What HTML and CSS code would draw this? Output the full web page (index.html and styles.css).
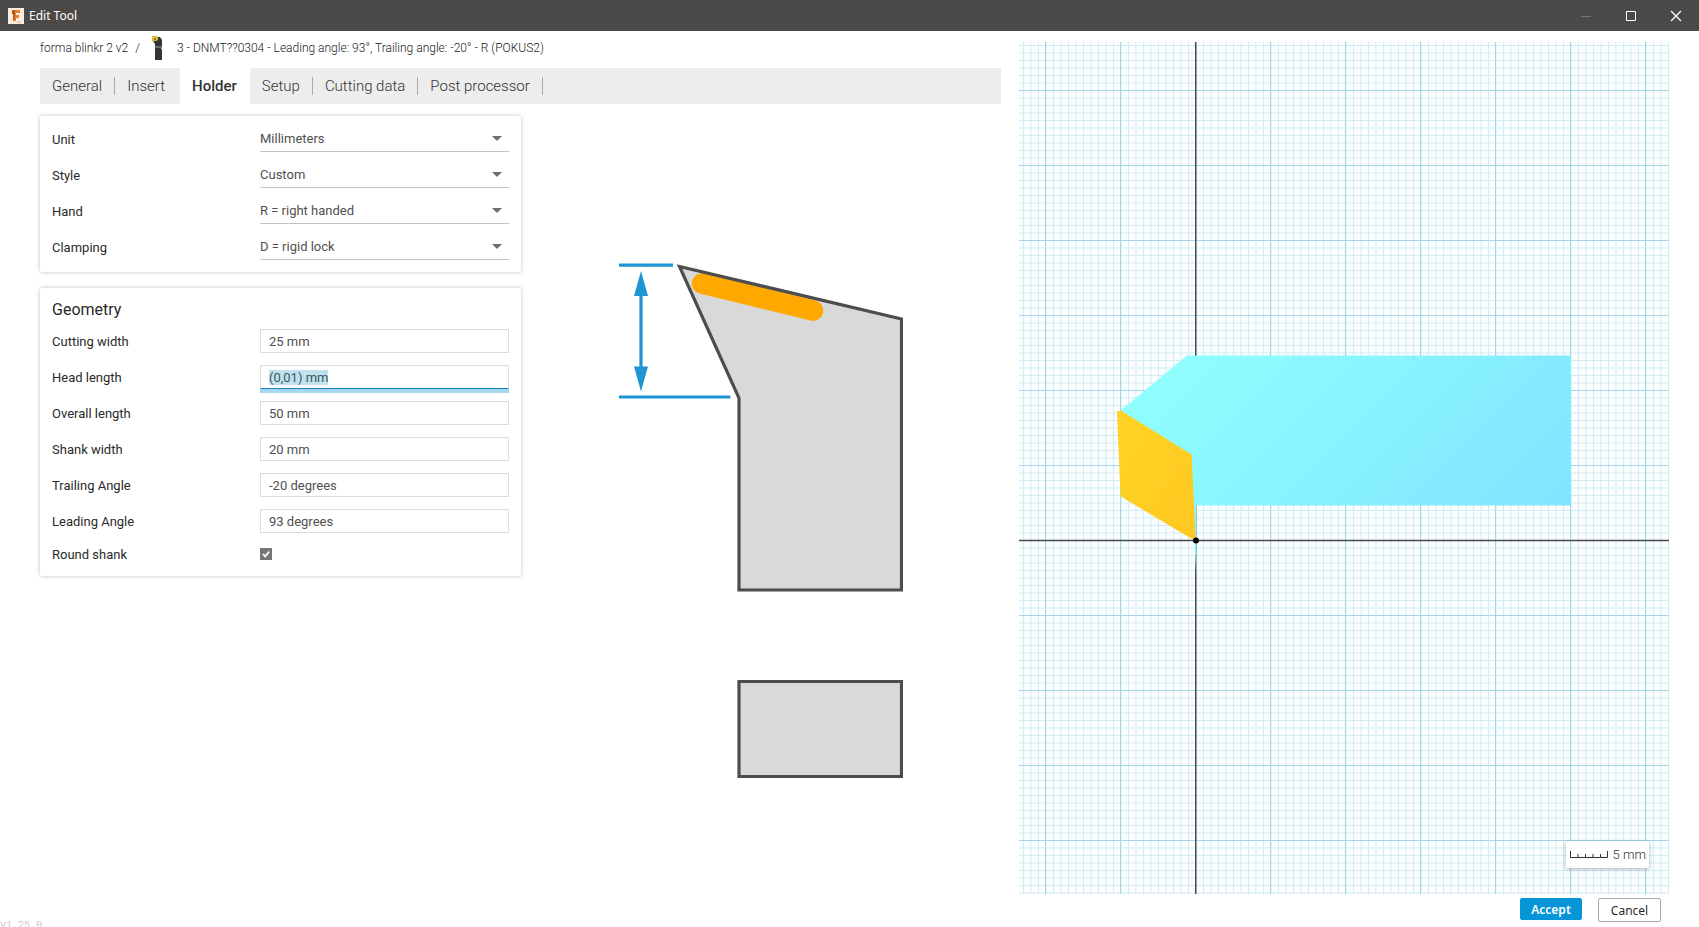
FILE: index.html
```html
<!DOCTYPE html>
<html lang="en">
<head>
<meta charset="utf-8">
<title>Edit Tool</title>
<link rel="stylesheet" href="styles.css">
</head>
<body>
<header class="titlebar">
  <svg class="app-icon" viewBox="0 0 16 16" aria-hidden="true">
    <rect width="16" height="16" fill="#fdebdc"/>
    <path d="M4 2h8v3H8v2h3v3H8v3H5V6H4z" fill="#e5812b"/>
    <path d="M4 2h3v9l-2 2V6H4z" fill="#b9591a"/>
    <path d="M9 14h4" stroke="#e0a67c"/>
  </svg>
  <h1 class="window-title">Edit Tool</h1>
  <div class="window-controls">
    <button class="window-button" disabled aria-label="Minimize"><svg viewBox="0 0 12 12"><path d="M1 6.5h10" stroke="#777673"/></svg></button>
    <button class="window-button" aria-label="Maximize"><svg viewBox="0 0 12 12"><path d="M1.5 1.5h9v9h-9z" stroke="#fff" fill="none"/></svg></button>
    <button class="window-button" aria-label="Close"><svg viewBox="0 0 12 12"><path d="M1 1l10 10M11 1L1 11" stroke="#fff" stroke-width="1.3"/></svg></button>
  </div>
</header>

<main class="workspace">
  <section class="editor">
    <nav class="breadcrumb" aria-label="Breadcrumb">
      <a class="crumb" href="#library">forma blinkr 2 v2</a>
      <span class="slash">/</span>
      <svg class="tool-icon" viewBox="0 0 10 24" aria-hidden="true">
        <path d="M1 1h7l2 3v6L9 12l1 2v10H3V8L1 5z" fill="#333436"/>
        <path d="M3 10h7v2H3z" fill="#6a6b6e"/>
        <path d="M0 0h6v4L4 5 0 5z" fill="#e5bd3c"/>
        <circle cx="3" cy="3" r="1" fill="#7c641d"/>
      </svg>
      <span>3 - DNMT??0304 - Leading angle: 93°, Trailing angle: -20° - R (POKUS2)</span>
    </nav>

    <div class="tabs" role="tablist">
      <button class="tab" role="tab">General</button>
      <button class="tab no-rule" role="tab">Insert</button>
      <button class="tab active" role="tab" aria-selected="true">Holder</button>
      <button class="tab" role="tab">Setup</button>
      <button class="tab" role="tab">Cutting data</button>
      <button class="tab" role="tab">Post processor</button>
    </div>

    <div class="holder">
      <form class="forms">
        <div class="card">
          <div class="row">
            <label for="unit">Unit</label>
            <div class="select"><select id="unit"><option>Millimeters</option><option>Inches</option></select><svg viewBox="0 0 10 5"><path d="M0 0h10L5 5z"/></svg></div>
          </div>
          <div class="row">
            <label for="style">Style</label>
            <div class="select"><select id="style"><option>Custom</option></select><svg viewBox="0 0 10 5"><path d="M0 0h10L5 5z"/></svg></div>
          </div>
          <div class="row">
            <label for="hand">Hand</label>
            <div class="select"><select id="hand"><option>R = right handed</option></select><svg viewBox="0 0 10 5"><path d="M0 0h10L5 5z"/></svg></div>
          </div>
          <div class="row">
            <label for="clamping">Clamping</label>
            <div class="select"><select id="clamping"><option>D = rigid lock</option></select><svg viewBox="0 0 10 5"><path d="M0 0h10L5 5z"/></svg></div>
          </div>
        </div>

        <div class="card">
          <h2 class="card-title">Geometry</h2>
          <div class="row"><label for="cutting-width">Cutting width</label><input class="field" type="text" id="cutting-width" value="25 mm"></div>
          <div class="row"><label for="head-length">Head length</label><input class="field" type="text" id="head-length" value="(0,01) mm"></div>
          <div class="row"><label for="overall-length">Overall length</label><input class="field" type="text" id="overall-length" value="50 mm"></div>
          <div class="row"><label for="shank-width">Shank width</label><input class="field" type="text" id="shank-width" value="20 mm"></div>
          <div class="row"><label for="trailing-angle">Trailing Angle</label><input class="field" type="text" id="trailing-angle" value="-20 degrees"></div>
          <div class="row"><label for="leading-angle">Leading Angle</label><input class="field" type="text" id="leading-angle" value="93 degrees"></div>
          <div class="row check-row">
            <label for="round-shank">Round shank</label>
            <div class="check"><input type="checkbox" id="round-shank" checked><svg viewBox="0 0 12 12"><path d="M3 6l2.2 2.3L9.2 3.6" fill="none" stroke="#fff" stroke-width="1.8"/></svg></div>
          </div>
        </div>
      </form>

      <div class="diagram">
        <svg viewBox="619 263 284 518" role="img" aria-label="Head length of the holder">
          <path d="M679.5 266.5L901.5 319v271H739V398z" fill="#d9d9d9"/>
          <path d="M702 283.5L813 310.5" stroke="#ffa900" stroke-width="20.5" stroke-linecap="round"/>
          <path d="M679.5 266.500L901.500 319v271H739V398z" fill="none" stroke="#4d4d4d" stroke-width="3.2"/>
          <path d="M739 681.5h162.500V776.500H739z" fill="#d9d9d9" stroke="#4d4d4d" stroke-width="3.2"/>
          <path d="M619 265.2h54M619 397h111.500M641 290v82" stroke="#1e95d3" stroke-width="3.2"/>
          <path d="M641 271l7 25h-14zM641 391.5l7-25h-14z" fill="#1e95d3"/>
        </svg>
      </div>
    </div>
  </section>

  <section class="preview">
    <div class="canvas">
      <svg class="scene" viewBox="0 0 650 852" preserveAspectRatio="xMidYMid slice" role="img" aria-label="Tool preview">
        <defs>
          <pattern id="minor" x="176.5" y="498" width="7.5" height="7.5" patternUnits="userSpaceOnUse">
            <path d="M0 .5h7.5M.5 0v7.5" stroke="#d3eaf2"/>
          </pattern>
          <pattern id="major" x="176" y="498" width="75" height="75" patternUnits="userSpaceOnUse">
            <path d="M0 .5h75M.5 0v75" stroke="#a6d6e6" stroke-width="1"/>
          </pattern>
          <linearGradient id="steel" gradientUnits="userSpaceOnUse" x1="200" y1="260" x2="480" y2="540">
            <stop offset="0" stop-color="#8fffff"/><stop offset="1" stop-color="#80e4ff"/>
          </linearGradient>
          <linearGradient id="carbide" x1="0" y1="0" x2="1" y2="1">
            <stop offset="0" stop-color="#ffd426"/><stop offset="1" stop-color="#ffc820"/>
          </linearGradient>
        </defs>
        <rect width="650" height="852" fill="#fafeff"/>
        <rect width="650" height="852" fill="url(#minor)"/>
        <rect width="650" height="852" fill="url(#major)"/>
        <path d="M0 498.5h650M176.750 0v852" stroke="#4a4a4a" stroke-width="1.5"/>
        <path d="M168 313.5H552V463.500H177.500V500L177 530 175.500 500 101 369z" fill="url(#steel)"/>
        <path d="M99.500 370.500l2-.5L171.200 413.500 175 496.500 103 453.500z" fill="url(#carbide)" stroke="url(#carbide)" stroke-width="3" stroke-linejoin="round"/>
        <circle cx="177" cy="498.5" r="3" fill="#000"/>
      </svg>
      <div class="scale">
        <svg viewBox="0 0 38 7" aria-hidden="true"><path d="M.5 0v6.500h37V0M8 3v3M15.500 3v3M23 3v3M30.500 3v3" fill="none" stroke="#333"/></svg>
        <span>5 mm</span>
      </div>
    </div>
    <footer class="actions">
      <button class="button primary">Accept</button>
      <button class="button">Cancel</button>
    </footer>
  </section>
</main>
<div class="version">v1.25.0</div>
<script src="app.js"></script>
</body>
</html>
```
FILE: styles.css
```css
* { box-sizing: border-box; }

body {
  margin: 0;
  height: 100vh;
  display: flex;
  flex-direction: column;
  overflow: hidden;
  position: relative;
  background: #fff;
  color: #2a2a2a;
  font-family: Roboto, "Noto Sans", sans-serif;
  font-size: 13px;
}

button, input, select { font: inherit; color: inherit; }

.titlebar {
  flex: none;
  display: flex;
  align-items: center;
  gap: 5px;
  height: 31px;
  padding: 0 1px 0 8px;
  background: #4c4a48;
  color: #fff;
}
.app-icon { width: 16px; height: 16px; }
.window-title { margin: 0; font-size: 12px; font-weight: 400; font-family: "Noto Sans", sans-serif; }
.window-controls { display: flex; margin-left: auto; }
.window-button {
  display: grid;
  place-items: center;
  width: 45px;
  height: 30px;
  padding: 0;
  border: 0;
  background: none;
}
.window-button svg { width: 12px; height: 12px; }

.workspace {
  flex: 1;
  min-height: 0;
  display: grid;
  grid-template-columns: 961fr 650fr;
  gap: 18px;
  padding: 0 30px 0 40px;
}

.editor { display: flex; flex-direction: column; min-width: 0; }

.breadcrumb {
  display: flex;
  align-items: center;
  height: 37px;
  padding-bottom: 4px;
  font-size: 12px;
  font-weight: 300;
  color: #222;
}
.crumb { color: inherit; text-decoration: none; }
.slash { padding: 0 12px 0 7px; }
.tool-icon { width: 10px; height: 24px; margin-right: 15px; }

.tabs { display: flex; height: 36px; background: #ededed; }
.tab {
  display: flex;
  align-items: center;
  padding: 0 0 0 12px;
  border: 0;
  background: none;
  font-size: 15px;
  font-weight: 300;
  color: #333;
}
.tab::after {
  content: "";
  height: 18px;
  margin-left: 12px;
  border-right: 1px solid #aaa;
}
.tab.no-rule::after, .tab.active::after { border-color: transparent; }
.tab.no-rule::after { margin-left: 14px; }
.tab.active { background: #fff; font-weight: 500; color: #333; }

.holder {
  flex: 1;
  min-height: 0;
  display: grid;
  grid-template-columns: 481fr 480fr;
  padding-top: 12px;
}
.forms { display: flex; flex-direction: column; gap: 16px; }
.card {
  padding: 5px 12px 7px;
  border-radius: 2px;
  background: #fff;
  box-shadow: 0 0 4px rgba(0, 0, 0, .25);
}
.card-title { margin: 0; padding-top: 4px; font-size: 16px; font-weight: 400; line-height: 26px; }
.row {
  display: grid;
  grid-template-columns: 208fr 249fr;
  align-items: center;
  height: 36px;
}
.check-row { height: 30px; }

.select { display: grid; align-items: center; border-bottom: 1px solid #c4c4c4; }
.select > * { grid-area: 1 / 1; }
.select select {
  width: 100%;
  height: 24px;
  padding: 0;
  border: 0;
  appearance: none;
  background: none;
  color: #505050;
}
.select svg {
  justify-self: end;
  width: 10px;
  height: 5px;
  margin-right: 7px;
  fill: #707070;
  pointer-events: none;
}

.field {
  width: 100%;
  height: 24px;
  padding: 0 8px;
  border: 1px solid #dcdcdc;
  background: #fff;
  color: #505050;
}
.field:focus {
  outline: 0;
  border-bottom-color: #1686b8;
  box-shadow: 0 4px 0 #a5d8f0;
}
.field::selection { background: #bfe3ee; color: #3c5560; }

.check { display: grid; width: 12px; height: 12px; }
.check > * { grid-area: 1 / 1; width: 12px; height: 12px; margin: 0; }
.check input { appearance: none; background: #fff; border: 1px solid #777; }
.check input:checked { background: #777; }
.check svg { pointer-events: none; }

.diagram { display: flex; align-items: center; justify-content: center; min-height: 0; }
.diagram svg { width: 284px; max-width: 100%; }

.preview { display: flex; flex-direction: column; min-width: 0; padding-top: 11px; }
.canvas { flex: 1; min-height: 0; position: relative; }
.scene { position: absolute; inset: 0; width: 100%; height: 100%; }
.scale {
  position: absolute;
  right: 20px;
  bottom: 26px;
  display: flex;
  align-items: center;
  gap: 5px;
  height: 27px;
  padding: 0 3px 0 4px;
  border-radius: 2px;
  background: #fff;
  box-shadow: 0 1px 4px rgba(0, 0, 0, .3);
  color: #333;
  font-weight: 300;
}
.scale svg { width: 38px; height: 7px; }

.actions {
  display: flex;
  justify-content: flex-end;
  gap: 16px;
  height: 33px;
  padding: 4px 8px 0 0;
}
.button {
  width: 63px;
  height: 24px;
  padding: 0;
  border: 1px solid #aaa;
  border-radius: 2px;
  background: #fff;
  font-family: "Noto Sans", sans-serif;
  font-size: 12px;
}
.button.primary {
  width: 62px;
  height: 22px;
  border-color: #0696d7;
  background: #0696d7;
  color: #fff;
  font-weight: 600;
}

.version {
  position: absolute;
  left: 0;
  bottom: -4px;
  color: #ccc;
  font-family: "Liberation Mono", monospace;
  font-size: 10px;
}
```
FILE: app.js
```js
const headLength = document.getElementById("head-length");
headLength.focus();
headLength.select();
```
